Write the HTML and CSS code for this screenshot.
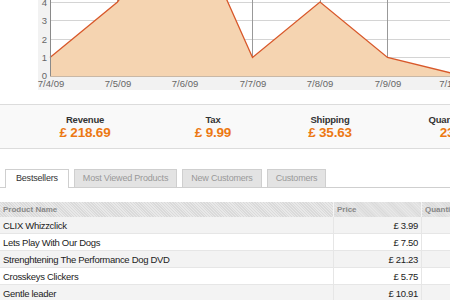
FILE: index.html
```html
<!DOCTYPE html>
<html>
<head>
    <title>Dashboard</title>
    <link rel="stylesheet" href="styles.css">
</head>
<body>
    <div class="chart">
        <svg width="450" height="90" viewBox="0 0 450 90">
            <rect x="38" y="0" width="412" height="90" fill="#f2f2f2"/>
            <rect x="50" y="0" width="400" height="76" fill="#fff"/>
            <g stroke="#d4d4d4" stroke-width="1">
                <line x1="50" y1="2.5" x2="450" y2="2.5"/>
                <line x1="50" y1="20.5" x2="450" y2="20.5"/>
                <line x1="50" y1="39.5" x2="450" y2="39.5"/>
                <line x1="50" y1="57.5" x2="450" y2="57.5"/>
            </g>
            <g stroke="#999" stroke-width="1">
                <line x1="117.5" y1="0" x2="117.5" y2="76"/>
                <line x1="185.5" y1="0" x2="185.5" y2="76"/>
                <line x1="252.5" y1="0" x2="252.5" y2="76"/>
                <line x1="320.5" y1="0" x2="320.5" y2="76"/>
                <line x1="387.5" y1="0" x2="387.5" y2="76"/>
            </g>
            <polygon fill="#f5d4b1" points="50,76 50,57.5 117.5,2 185,-94 252.5,57.5 320,2 387.5,57.5 455,74 455,76"/>
            <polyline fill="none" stroke="#d8582a" stroke-width="1.3" points="50,57.5 117.5,2 185,-94 252.5,57.5 320,2 387.5,57.5 455,74"/>
            <line x1="50.5" y1="0" x2="50.5" y2="76" stroke="#8a8a8a"/>
            <line x1="50" y1="76.5" x2="450" y2="76.5" stroke="#c9b8a6"/>
            <g class="axis-label" text-anchor="end">
                <text x="47" y="6">4</text>
                <text x="47" y="24">3</text>
                <text x="47" y="43">2</text>
                <text x="47" y="61">1</text>
                <text x="47" y="79">0</text>
            </g>
            <g class="axis-label" text-anchor="middle">
                <text x="51" y="87">7/4/09</text>
                <text x="118" y="87">7/5/09</text>
                <text x="185" y="87">7/6/09</text>
                <text x="253" y="87">7/7/09</text>
                <text x="320" y="87">7/8/09</text>
                <text x="388" y="87">7/9/09</text>
                <text x="455" y="87">7/10/09</text>
            </g>
        </svg>
    </div>

    <div class="totals">
        <div class="total">
            <div class="total-label">Revenue</div>
            <div class="total-value">£ 218.69</div>
        </div>
        <div class="total">
            <div class="total-label">Tax</div>
            <div class="total-value">£ 9.99</div>
        </div>
        <div class="total">
            <div class="total-label">Shipping</div>
            <div class="total-value">£ 35.63</div>
        </div>
        <div class="total">
            <div class="total-label">Quantity</div>
            <div class="total-value">23</div>
        </div>
    </div>

    <ul class="tabs">
        <li class="tab active">Bestsellers</li>
        <li class="tab">Most Viewed Products</li>
        <li class="tab">New Customers</li>
        <li class="tab">Customers</li>
    </ul>

    <table class="grid">
        <thead>
            <tr>
                <th class="col-name">Product Name</th>
                <th class="col-price">Price</th>
                <th class="col-qty">Quantity</th>
            </tr>
        </thead>
        <tbody>
            <tr><td>CLIX Whizzclick</td><td class="price">£ 3.99</td><td></td></tr>
            <tr><td>Lets Play With Our Dogs</td><td class="price">£ 7.50</td><td></td></tr>
            <tr><td>Strenghtening The Performance Dog DVD</td><td class="price">£ 21.23</td><td></td></tr>
            <tr><td>Crosskeys Clickers</td><td class="price">£ 5.75</td><td></td></tr>
            <tr><td>Gentle leader</td><td class="price">£ 10.91</td><td></td></tr>
        </tbody>
    </table>
</body>
</html>
```

FILE: styles.css
```css
body {
    margin: 0;
    padding: 0;
    width: 450px;
    height: 300px;
    overflow: hidden;
    background-color: white;
    font-family: "Liberation Sans", Arial, sans-serif;
    color: #222;
}

.chart {
    height: 90px;
}

    .chart svg {
        display: block;
    }

.axis-label {
    font-family: "Liberation Sans", Arial, sans-serif;
    font-size: 9.5px;
    fill: #666;
}

.totals {
    display: grid;
    grid-template-columns: 170px 86px 148px 86px;
    margin-top: 14px;
    height: 43px;
    background-color: #f9f9f9;
    border-top: 1px solid #dcdcdc;
    border-bottom: 1px solid #dcdcdc;
}

.total {
    text-align: center;
    padding-top: 9px;
    white-space: nowrap;
}

.total-label {
    font-size: 9.5px;
    font-weight: bold;
    letter-spacing: -0.2px;
    color: #333;
    line-height: 11px;
}

.total-value {
    font-size: 13.5px;
    font-weight: bold;
    letter-spacing: -0.2px;
    color: #ec7813;
    line-height: 16px;
}

.tabs {
    list-style-type: none;
    display: flex;
    gap: 5px;
    margin: 20px 0 0 0;
    padding: 0 0 0 5px;
    border-bottom: 1px solid #cfcfcf;
    height: 18px;
}

.tab {
    font-size: 9px;
    letter-spacing: -0.2px;
    line-height: 17px;
    padding: 0 8px;
    color: #999;
    background-color: #e3e3e3;
    border: 1px solid #cfcfcf;
    border-bottom: none;
    white-space: nowrap;
}

    .tab.active {
        color: #333;
        background-color: white;
        height: 18px;
        padding: 0 10px;
    }

.grid {
    width: 100%;
    table-layout: fixed;
    border-collapse: collapse;
    margin-top: 14px;
    font-size: 9.5px;
    letter-spacing: -0.3px;
}

    .grid th {
        height: 15px;
        padding: 0 0 0 3px;
        text-align: left;
        font-size: 8px;
        letter-spacing: 0;
        font-weight: bold;
        color: #888;
        background-color: #e2e2e2;
        background-image: repeating-linear-gradient(45deg, #dadada 0, #dadada 1px, #e8e8e8 1px, #e8e8e8 2px);
        border-right: 1px solid #f4f4f4;
        white-space: nowrap;
        overflow: hidden;
    }

    .grid td {
        height: 16px;
        padding: 0 3px;
        border-bottom: 1px solid #e6e6e6;
        border-right: 1px solid #e6e6e6;
        white-space: nowrap;
        overflow: hidden;
    }

    .grid tbody tr:nth-child(odd) {
        background-color: #f3f3f3;
    }

.col-name {
    width: 330px;
}

.col-price {
    width: 84px;
}

.col-qty {
    width: 80px;
}

.price {
    text-align: right;
}
```
